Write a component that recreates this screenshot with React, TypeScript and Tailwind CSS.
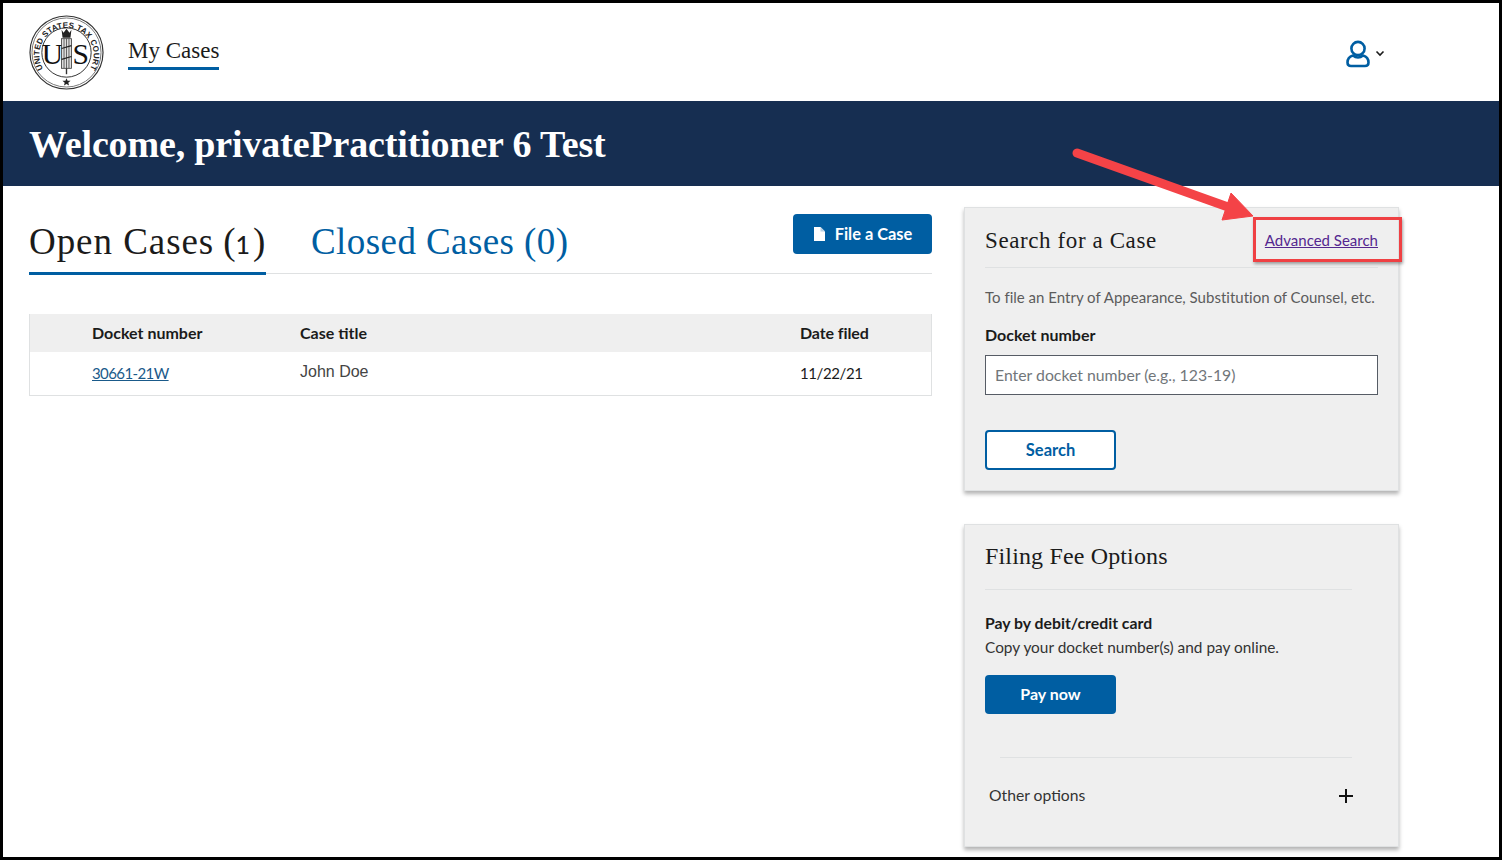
const serif = "font-['Liberation_Serif',serif]";
const sans = "font-['Lato','Noto_Sans',sans-serif]";

const Seal = () => (
  <svg width="75" height="75" viewBox="0 0 76 76" className="shrink-0">
    <circle cx="38" cy="38" r="37" fill="#fff" stroke="#333" strokeWidth="1.2" />
    <circle cx="38" cy="38" r="35" fill="none" stroke="#777" strokeWidth="1" />
    <circle cx="38" cy="38" r="25" fill="none" stroke="#333" strokeWidth="1" />
    <defs>
      <path id="sealText" d="M 13.5 53 A 27.5 27.5 0 1 1 62.5 53" />
    </defs>
    <text fontSize="8.2" fontWeight="700" fill="#222" fontFamily="Liberation Sans, sans-serif" letterSpacing="0.1">
      <textPath href="#sealText" startOffset="50%" textAnchor="middle">
        UNITED STATES TAX COURT
      </textPath>
    </text>
    <text x="13" y="50" fontSize="30" fill="#111" fontFamily="Liberation Serif, serif">U</text>
    <text x="44" y="50" fontSize="30" fill="#111" fontFamily="Liberation Serif, serif">S</text>
    <path d="M33 15l2 3 3-4 3 4 2-3-1 8H34z" fill="#222" />
    <rect x="33" y="24" width="10" height="30" fill="#ddd" stroke="#333" strokeWidth="0.8" />
    <path d="M35.5 24v30M38 24v30M40.5 24v30" stroke="#444" strokeWidth="0.8" />
    <path d="M33 34l10-3M33 45l10-3" stroke="#222" strokeWidth="1.2" />
    <path d="M38 54v6" stroke="#333" strokeWidth="1.4" />
    <path d="M38 64l1.1 2.6 3 .1-2.3 1.9.8 2.9-2.6-1.6-2.6 1.6.8-2.9-2.3-1.9 3-.1z" fill="#222" />
  </svg>
);

const UserIcon = () => (
  <svg width="24" height="28" viewBox="0 0 24 28" fill="none" stroke="#005ea2" strokeWidth="2.6">
    <circle cx="12" cy="8.5" r="6.6" />
    <path d="M7 15.5C3.5 16.5 1.5 19 1.5 22.5 1.5 25 3 26 5 26H19C21 26 22.5 25 22.5 22.5 22.5 19 20.5 16.5 17 15.5 14 18 10 18 7 15.5Z" />
  </svg>
);

const Header = () => (
  <header className="flex h-[98px] items-center bg-white pl-[26px] pr-[114px]">
    <Seal />
    <a className={`${serif} ml-[24px] mt-[3px] border-b-[3px] border-[#005ea2] pb-[2px] text-[23px] leading-[28px] text-[#1b1b1b]`}>My Cases</a>
    <div className="ml-auto mt-[3px] flex items-center gap-[5px]">
      <UserIcon />
      <svg width="10" height="7" viewBox="0 0 10 7" fill="none" stroke="#1b1b1b" strokeWidth="1.6">
        <path d="M1.5 1.5 5 5l3.5-3.5" />
      </svg>
    </div>
  </header>
);

const CasesPanel = () => (
  <section className="w-[903px]">
    <div className="flex h-[88px] items-start border-b border-[#dfe1e2]">
      <div className={`${serif} mt-[35px] h-[54px] w-[237px] shrink-0 whitespace-nowrap border-b-[3px] border-[#005ea2] text-[37px] leading-[42px] tracking-[0.95px] text-[#1b1b1b]`}>
        Open Cases<span className="ml-[9px]">(</span><span className={`${sans} ml-[-1px] text-[25px] font-medium`}>1</span><span className="ml-[2px]">)</span>
      </div>
      <div className={`${serif} ml-[45px] mt-[35px] text-[37px] leading-[42px] tracking-[0.42px] text-[#005ea2]`}>Closed Cases (0)</div>
      <button className={`${sans} ml-auto mt-[28px] flex h-[40px] w-[139px] items-center justify-center gap-[10px] rounded bg-[#005ea2] text-[16.4px] font-bold text-white`}>
        <svg width="12" height="14" viewBox="0 0 12 14" fill="#fff"><path d="M1 0h6.5L12 4.5V14H1z" /><path d="M7.5 0v4.5H12z" fill="#b8d0e4" /></svg>
        File a Case
      </button>
    </div>
    <div className={`${sans} mt-[40px] border-x border-b border-[#dfe1e2] text-[16px] text-[#1b1b1b]`}>
      <div className="grid h-[38px] grid-cols-[269px_501px_1fr] items-center bg-[#efefef] font-bold">
        <span className="pl-[62px]">Docket number</span>
        <span className="pl-[1px]">Case title</span>
        <span className="tracking-[-0.1px]">Date filed</span>
      </div>
      <div className="grid h-[43px] grid-cols-[269px_501px_1fr] items-center">
        <a className="pl-[62px] text-[15px] tracking-[-0.6px] text-[#1a5a8a]"><span className="underline">30661-21W</span></a>
        <span className="mt-[-4px] pl-[1px] font-['Liberation_Sans',sans-serif] text-[#444]">John Doe</span>
        <span className="text-[15px] tracking-[-0.4px]">11/22/21</span>
      </div>
    </div>
  </section>
);

const SearchCard = () => (
  <section className={`${sans} relative h-[284px] border border-[#dfe1e2] bg-[#efefef] px-[20px] shadow-[0_3px_4px_rgba(0,0,0,0.3)]`}>
    <div className="flex h-[60px] w-[393px] items-center justify-between border-b border-[#dfe1e2] pt-[7px]">
      <h2 className={`${serif} text-[23px] tracking-[0.6px] text-[#1b1b1b]`}>Search for a Case</h2>
      <a className="mt-[-2px] text-[15px] text-[#54278f] underline">Advanced Search</a>
    </div>
    <p className="mt-[19px] text-[15px] leading-[20px] tracking-[0.01px] text-[#5c5c5c]">To file an Entry of Appearance, Substitution of Counsel, etc.</p>
    <label className="mt-[18px] block text-[16px] font-bold leading-[20px] text-[#1b1b1b]">Docket number</label>
    <div className="mt-[10px] flex h-[40px] w-[393px] items-center border border-[#565c65] bg-white pl-[9px] text-[15.8px] text-[#71767a]">Enter docket number (e.g., 123-19)</div>
    <button className="mt-[35px] h-[40px] w-[131px] rounded border-2 border-[#005ea2] bg-white text-[16.5px] font-bold text-[#005ea2]">Search</button>
  </section>
);

const FeeCard = () => (
  <section className={`${sans} mt-[33px] h-[323px] border border-[#dfe1e2] bg-[#efefef] px-[20px] shadow-[0_3px_4px_rgba(0,0,0,0.3)]`}>
    <h2 className={`${serif} h-[65px] w-[367px] border-b border-[#dfe1e2] pt-[13px] text-[24px] tracking-[0.15px] text-[#1b1b1b]`}>Filing Fee Options</h2>
    <p className="mt-[22px] text-[15.8px] font-bold leading-[22px] text-[#1b1b1b]">Pay by debit/credit card</p>
    <p className="mt-[2px] text-[15.4px] leading-[22px] text-[#333]">Copy your docket number(s) and pay online.</p>
    <button className="mt-[17px] h-[39px] w-[131px] rounded bg-[#005ea2] pb-[2px] text-[16px] font-bold text-white">Pay now</button>
    <div className="ml-[15px] mt-[43px] w-[352px] border-t border-[#dfe1e2]" />
    <div className="mt-[26px] flex w-[368px] items-center justify-between pl-[4px] text-[15.7px] text-[#333]">
      <span>Other options</span>
      <svg width="14" height="14" viewBox="0 0 14 14" stroke="#111" strokeWidth="2"><path d="M0 7h14M7 0v14" /></svg>
    </div>
  </section>
);

export default function App() {
  return (
    <div className="relative h-[860px] w-[1502px] overflow-hidden border-[3px] border-black bg-white">
      <Header />
      <div className={`${serif} flex h-[85px] items-center bg-[#162e51] pl-[26px] pt-[2px] text-[38px] font-bold tracking-[-0.15px] text-white`}>
        Welcome, privatePractitioner 6 Test
      </div>
      <main className="flex items-start pl-[26px]">
        <CasesPanel />
        <div className="ml-[32px] mt-[21px] w-[435px]">
          <SearchCard />
          <FeeCard />
        </div>
      </main>
      {/* callout drawn on top of the page */}
      <div className="absolute left-[1250px] top-[214px] h-[45px] w-[149px] border-[3px] border-[#ef4043] shadow-[1px_2px_3px_rgba(0,0,0,0.35)]" />
      <svg className="absolute left-[1060px] top-[140px]" width="200" height="85" viewBox="0 0 200 85">
        <path d="M14 10 L165 64" stroke="#f44347" strokeWidth="9" strokeLinecap="round" fill="none" />
        <path d="M168 50 L190 73 L159 77 Z" fill="#f44347" stroke="#f44347" strokeWidth="1" strokeLinejoin="round" />
      </svg>
    </div>
  );
}
